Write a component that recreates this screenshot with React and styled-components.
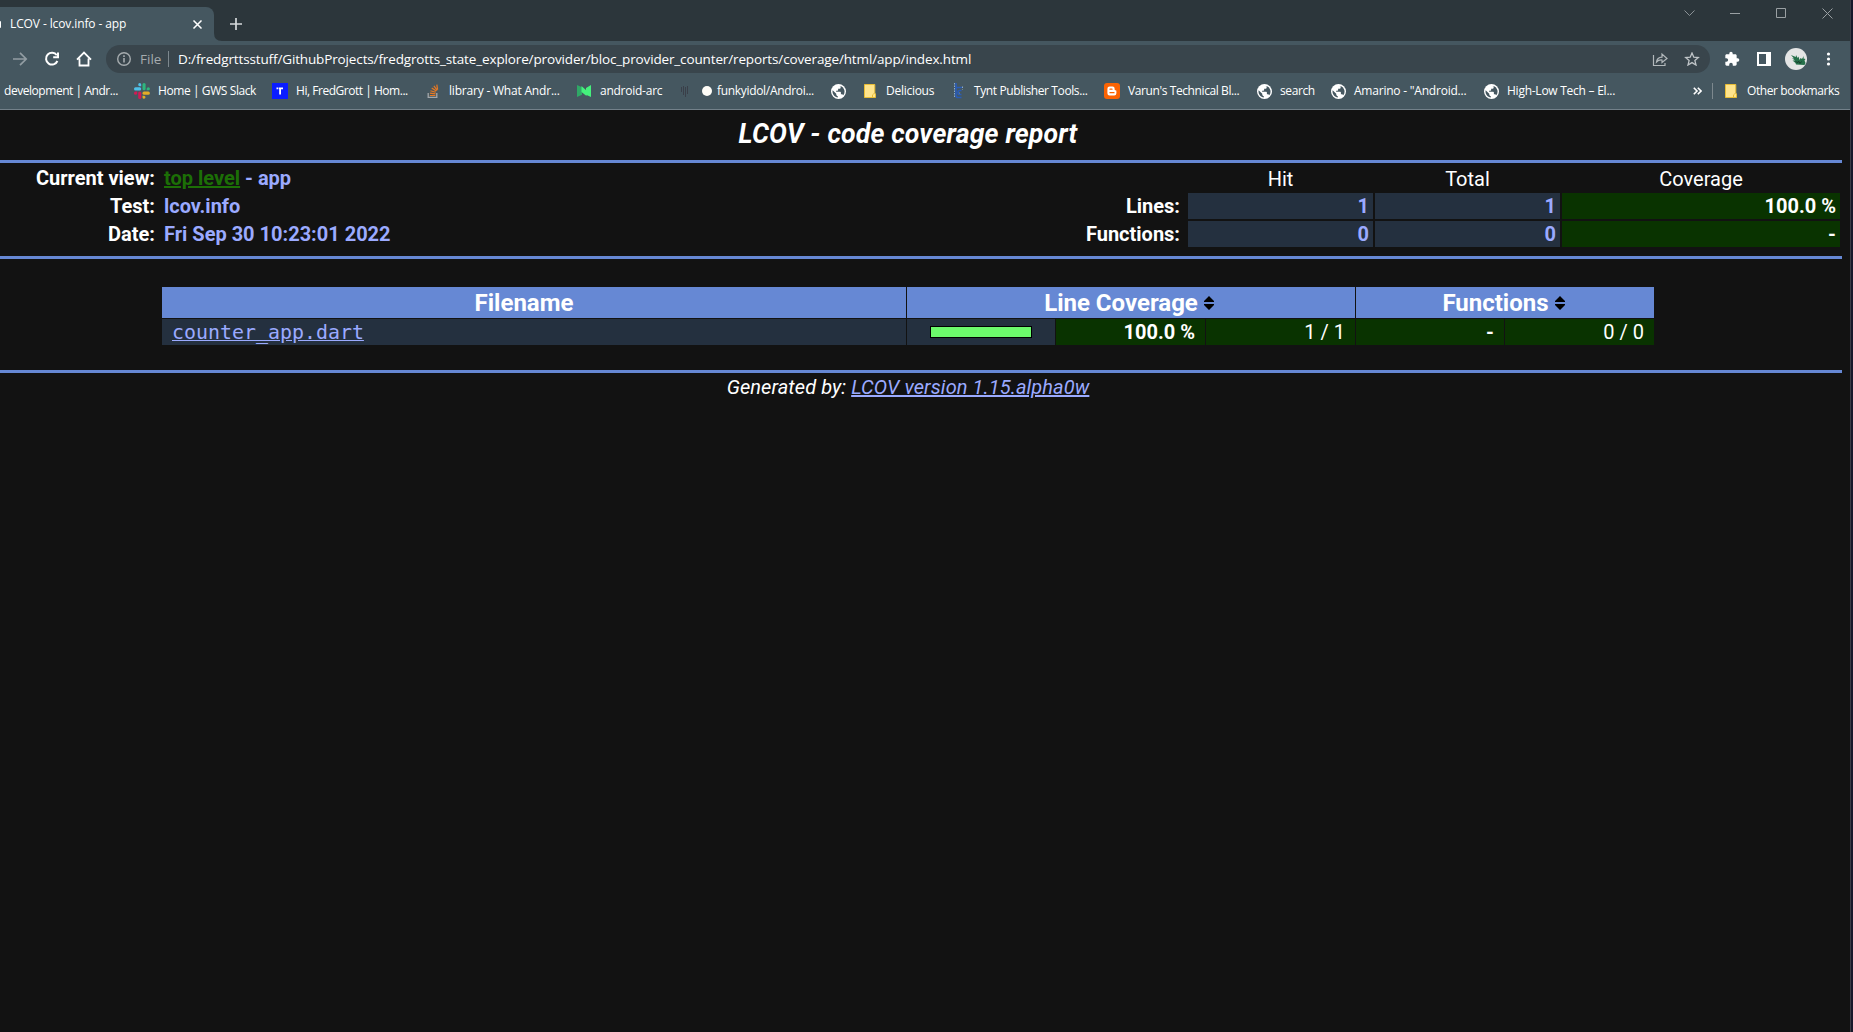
import React from 'react';
import styled, { createGlobalStyle } from 'styled-components';

const color = {
  frame: '#2c363b',
  bar: '#455760',
  omnibox: '#39454c',
  page: '#121212',
  rule: '#6688d4',
  cell: '#24303f',
  high: '#093300',
  value: '#9baaff',
};

const Global = createGlobalStyle`
  * { box-sizing: border-box; }
  body { margin: 0; background: #12131f; overflow: hidden; }
`;

/* ---------- browser chrome ---------- */

const Desktop = styled.div`
  display: flex;
  width: 1853px;
  height: 1032px;
  background: #17182a;
  font-family: 'Open Sans', 'Noto Sans', sans-serif;
`;

const Window = styled.div`
  display: flex;
  flex-direction: column;
  width: 1851px;
  height: 1032px;
  border-right: 1px solid #3b3c45;
  background: ${color.page};
`;

const TabStrip = styled.div`
  display: flex;
  align-items: flex-end;
  height: 41px;
  flex: none;
  background: ${color.frame};
`;

const Tab = styled.div`
  display: flex;
  align-items: center;
  width: 214px;
  height: 34px;
  padding-right: 11px;
  background: ${color.bar};
  border-radius: 0 8px 0 0;
  color: #fff;
`;

const Favicon = styled.span`
  width: 1px;
  height: 7px;
  margin-right: 9px;
  border-radius: 0 1px 1px 0;
  background: #fff;
`;

const TabTitle = styled.span`
  flex: 1;
  font-size: 12px;
  letter-spacing: -0.11px;
  line-height: 16px;
  white-space: nowrap;
`;

const TabCurve = styled.svg`
  width: 8px;
  height: 8px;
  fill: ${color.bar};
`;

const NewTab = styled.div`
  display: flex;
  align-items: center;
  height: 34px;
  padding-left: 8px;
`;

const WindowButtons = styled.div`
  display: flex;
  align-self: flex-start;
  align-items: center;
  height: 26px;
  margin-left: auto;
`;

const WindowButton = styled.span`
  display: flex;
  justify-content: center;
  width: 46px;
`;

const Toolbar = styled.div`
  display: flex;
  align-items: center;
  height: 36px;
  flex: none;
  padding: 0 13px 0 12px;
  background: ${color.bar};
`;

const NavButtons = styled.div`
  display: flex;
  gap: 16px;
  margin-right: 14px;
`;

const Omnibox = styled.div`
  display: flex;
  align-items: center;
  flex: none;
  width: 1604px;
  height: 28px;
  padding: 0 10px 0 10px;
  border-radius: 14px;
  background: ${color.omnibox};
  font-size: 13.5px;
  line-height: 20px;
  color: #fff;
`;

const Scheme = styled.span`
  width: 28px;
  margin-left: 8px;
  font-size: 13.5px;
  color: #a5abae;
`;

const Divider = styled.span`
  width: 1px;
  height: 16px;
  background: #7d888e;
`;

const Address = styled.span`
  flex: 1;
  margin-left: 9px;
  letter-spacing: -0.136px;
  white-space: nowrap;
`;

const OmniboxActions = styled.span`
  display: flex;
  gap: 16px;
`;

const ToolbarActions = styled.div`
  display: flex;
  align-items: center;
  gap: 14px;
  padding-left: 14px;
`;

const BookmarksBar = styled.div`
  display: flex;
  align-items: center;
  height: 33px;
  flex: none;
  padding-bottom: 4px;
  border-bottom: 1px solid #73818a;
  background: ${color.bar};
  font-size: 12px;
  line-height: 16px;
  color: #fff;
  overflow: hidden;
`;

const Bookmark = styled.div`
  display: flex;
  align-items: center;
  flex: none;
  gap: 8px;
  width: ${(p) => p.$width}px;
  letter-spacing: ${(p) => p.$tracking || 0}px;
  white-space: nowrap;
`;

const CutBookmark = styled(Bookmark)`
  padding-left: 4px;
`;

const IconSlot = styled.span`
  display: flex;
  align-items: center;
  justify-content: center;
  width: 16px;
  height: 16px;
  flex: none;
`;

const TitleDot = styled.span`
  width: 10px;
  height: 10px;
  margin: 0 -3px 0 1px;
  border-radius: 50%;
  background: #fffdf8;
`;

const Overflow = styled.div`
  display: flex;
  align-items: center;
  gap: 10px;
  margin-left: auto;
  padding-right: 10px;
`;

/* ---------- report ---------- */

const Report = styled.main`
  width: 1842px;
  font-family: Roboto, 'Liberation Sans', sans-serif;
  font-size: 20px;
  line-height: 24px;
  color: #fff;
`;

const Title = styled.h1`
  height: 50px;
  margin: 0;
  padding: 8px 26px 0 0;
  text-align: center;
  font-size: 26.67px;
  line-height: 32px;
  font-style: italic;
  font-weight: 700;
  letter-spacing: 0.14px;
`;

const Rule = styled.div`
  height: 3px;
  background: ${color.rule};
`;

const Summary = styled.section`
  display: flex;
  justify-content: space-between;
  height: 93px;
  padding: 2px 2px 0 0;
`;

const Facts = styled.dl`
  display: grid;
  grid-template-columns: 155px auto;
  grid-auto-rows: 28px;
  column-gap: 9px;
  align-content: start;
  margin: 0;
  line-height: 27px;
  font-weight: 700;
`;

const FactName = styled.dt`
  text-align: right;
`;

const FactValue = styled.dd`
  margin: 0;
  color: ${color.value};
`;

const Link = styled.a`
  color: ${(p) => (p.$visited ? '#1c6f06' : color.value)};
  text-decoration: underline;
`;

const Totals = styled.div`
  display: grid;
  grid-template-columns: 110px 185px 185px 278px;
  grid-template-rows: 26px 26px 26px;
  column-gap: 2px;
  row-gap: 2px;
  align-content: start;
`;

const TotalsHead = styled.div`
  text-align: center;
  line-height: 28px;
`;

const TotalsLabel = styled.div`
  padding-right: 6px;
  text-align: right;
  line-height: 26px;
  font-weight: 700;
`;

const TotalsCell = styled.div`
  padding-right: 4px;
  text-align: right;
  line-height: 26px;
  font-weight: 700;
  color: ${(p) => (p.$high ? '#fff' : color.value)};
  background: ${(p) => (p.$high ? color.high : color.cell)};
`;

const FileTable = styled.section`
  display: grid;
  grid-template-columns: 744px 148px 149px 149px 148px 149px;
  grid-template-rows: 31px 26px;
  gap: 1px;
  margin: 28px 0 25px 162px;
`;

const ColumnHead = styled.div`
  display: flex;
  align-items: center;
  justify-content: center;
  gap: 6px;
  grid-column: span ${(p) => p.$span || 1};
  padding: 1px ${(p) => p.$inset || 0}px 0 0;
  background: ${color.rule};
  font-size: 24px;
  line-height: 30px;
  font-weight: 700;
`;

const FileCell = styled.div`
  padding: 1px 0 0 10px;
  background: ${color.cell};
  font-family: 'DejaVu Sans Mono', 'Liberation Mono', monospace;
  font-size: 19.93px;
  line-height: 26px;
`;

const BarCell = styled.div`
  display: flex;
  align-items: center;
  justify-content: center;
  background: ${color.cell};
`;

const Bar = styled.div`
  width: 102px;
  height: 12px;
  border: 1px solid #000;
  background: #6cfa6c;
`;

const RateCell = styled.div`
  padding-right: 10px;
  background: ${color.high};
  text-align: right;
  line-height: 26px;
  font-weight: ${(p) => (p.$bold ? 700 : 400)};
`;

const Footer = styled.footer`
  padding: 2px 26px 0 0;
  text-align: center;
  font-style: italic;
  line-height: 24px;
  letter-spacing: 0.08px;
`;

/* ---------- icons ---------- */

const Globe = () => (
  <svg width="15" height="15" viewBox="2 2 20 20">
    <circle cx="12" cy="12" r="10" fill="#fff" />
    <path d="M4.200 10.200 9 15v1c0 1.100.9 2 2 2v1.900C7 19.400 4 16 4 12c0-.6.100-1.200.2-1.800ZM13 5h2l-.2 2c0 .800-.8 1.300-1.800 1.300h-1.500V10c0 .6-.5 1-1 1H8.800v1.200h5.400c.6 0 1 .4 1 1v2.600h1.300c.800 0 1.500.5 1.800 1.200A8 8 0 0 0 15 4.600Z" fill={color.bar} />
  </svg>
);

const Folder = () => (
  <svg width="12" height="14" viewBox="0 0 12 14">
    <path d="M.5.5h10.300v9.200h.7v3.800H.5Z" fill="#ffe48c" stroke="#e9bd35" />
    <path d="M8.500 13.500v-2.600l1.400-1.300" fill="none" stroke="#e9bd35" />
  </svg>
);

const Slack = () => (
  <svg width="16" height="16" viewBox="0 0 16 16">
    <g fill="#4fc0e8"><rect x="0" y="4.300" width="7.200" height="3.100" rx="1.500" /><path d="M4.200 1.600a1.500 1.500 0 0 1 3 0v1.600H5.700A1.500 1.500 0 0 1 4.200 1.600Z" /></g>
    <g fill="#2eb67d"><rect x="8.500" y="0" width="3.100" height="7.300" rx="1.500" /><path d="M12.700 7.300V5.800a1.600 1.500 0 1 1 1.600 1.500Z" /></g>
    <g fill="#d01b55"><rect x="4.200" y="8.600" width="3.100" height="7.300" rx="1.500" /><path d="M3.200 8.600v1.600a1.600 1.600 0 1 1-1.600-1.600Z" /></g>
    <g fill="#e3ac26"><rect x="8.500" y="8.600" width="7.300" height="3.100" rx="1.500" /><path d="M8.500 12.800h1.600a1.500 1.500 0 1 1-1.600 1.600Z" /></g>
  </svg>
);

const BlueT = () => (
  <svg width="16" height="16" viewBox="0 0 16 16">
    <path fill="#0a1cff" d="M0 0h16v16H0z" />
    <path fill="#fff" d="M4.500 4.500h1.600v1.700H4.500zM6.700 4.500H11v1.700H9V11.500H7.200V6.200h-.5z" />
  </svg>
);

const Stack = () => (
  <svg width="12" height="15" viewBox="0 0 12 15">
    <path d="M1.200 9v4.400h8.600V9" fill="none" stroke="#a3a8ac" strokeWidth="1.300" />
    <path d="M2.800 11.500h5.600M2.900 9.200l5.600.6M3.400 6.700l5.300 1.600M4.700 4.100l4.600 3M6.900 1.900l3.300 4.400M9.800.6l.8 5" stroke="#e87922" strokeWidth="1.200" />
  </svg>
);

const ArcMark = () => (
  <svg width="14" height="12" viewBox="0 0 14 12">
    <path fill="#2fa866" d="M0 0 5 2.200V9.800L0 12Z" />
    <path fill="#45f07c" d="M4.500 1 9.500 5.500V11L4.500 7ZM14 0V12L9 9.800V3Z" />
  </svg>
);

const Fork = () => (
  <svg width="8" height="11" viewBox="0 0 8 11">
    <path d="M.5 1v5M2.500 0v9M4.500 1v10M6.500 0v8" stroke="#3a3f49" strokeWidth="1" />
  </svg>
);

const Tynt = () => (
  <svg width="9" height="16" viewBox="0 0 9 16">
    <path d="M.5 0v14M8.500 3.500v3M5 9.500v2.500" stroke="#8fabc4" strokeDasharray="1.500 1" />
    <path d="M2 0v12.500q0 2 2 2h3.500M2 4.500h6M7.500 7.500H5.500q-1.500 0-1.500 2 0 2 1.500 2h2" fill="none" stroke="#2b5cb4" strokeWidth="1.700" />
  </svg>
);

const Blogger = () => (
  <svg width="16" height="16" viewBox="0 0 16 16">
    <rect width="16" height="16" rx="3" fill="#fb6303" />
    <path d="M5.600 3.500h3q2 0 2 2v.8q0 .9.900.9.900 0 .9.900v2.200q0 2.200-2.200 2.200H5.600q-2.200 0-2.200-2.200V5.700q0-2.200 2.200-2.200Z" fill="#fff" />
    <path d="M6 6.200h2M6 9.700h4" stroke="#fb6303" strokeWidth="1.300" strokeLinecap="round" />
  </svg>
);

const Sorter = () => (
  <svg width="10" height="14" viewBox="0 0 10 14">
    <path d="M5 0 10 5v1H0V5ZM0 8h10v1l-5 5-5-5Z" fill="#000" />
  </svg>
);

const Line = ({ w = 14, h = 14, d, stroke = '#fff', width = 1, fill = 'none' }) => (
  <svg width={w} height={h} viewBox={`0 0 ${w} ${h}`}>
    <path d={d} fill={fill} stroke={stroke} strokeWidth={width} />
  </svg>
);

const Avatar = () => (
  <svg width="22" height="22" viewBox="0 0 22 22">
    <circle cx="11" cy="11" r="11" fill="#e4e5e5" />
    <path d="M6 7l3 3.500-2-.3 3 2.300-2.500 0 3 2.500.5 1.500 8.500.5 1-2-1-2.500 1-1.500-2-.5.2-2.500-1.700 3-1.500-1-1 2-1-3.500-.8 1.500-1.700-3-.2 2Z" fill="#25704a" />
    <path d="M10.500 13l2 2 1-2 1.500 2.500 1.500-2" fill="none" stroke="#173f2c" />
  </svg>
);

const bookmarks = [
  { label: 'Home | GWS Slack', icon: <Slack />, width: 138, tracking: -0.41 },
  { label: 'Hi, FredGrott | Hom...', icon: <BlueT />, width: 153, tracking: -0.47 },
  { label: 'library - What Andr...', icon: <Stack />, width: 151, tracking: -0.2 },
  { label: 'android-arc', icon: <ArcMark />, width: 101, tracking: -0.25 },
  { label: 'funkyidol/Androi...', icon: <Fork />, dot: true, width: 153, tracking: -0.32 },
  { label: '', icon: <Globe />, width: 32 },
  { label: 'Delicious', icon: <Folder />, width: 88, tracking: -0.27 },
  { label: 'Tynt Publisher Tools...', icon: <Tynt />, width: 154, tracking: -0.39 },
  { label: "Varun's Technical Bl...", icon: <Blogger />, width: 152, tracking: -0.4 },
  { label: 'search', icon: <Globe />, width: 74, tracking: -0.4 },
  { label: 'Amarino - "Android...', icon: <Globe />, width: 153, tracking: -0.22 },
  { label: 'High-Low Tech – El...', icon: <Globe />, width: 140, tracking: -0.25 },
];

function Chrome() {
  return (
    <>
      <TabStrip>
        <Tab>
          <Favicon />
          <TabTitle>LCOV - lcov.info - app</TabTitle>
          <Line w={11} h={9} d="M1.500.5l8 8M9.500.5l-8 8" width={1.500} />
        </Tab>
        <TabCurve viewBox="0 0 8 8"><path d="M0 0Q0 8 8 8H0Z" /></TabCurve>
        <NewTab><Line w={12} h={12} d="M6 0v12M0 6h12" stroke="#d5d9db" width={1.700} /></NewTab>
        <WindowButtons>
          <WindowButton><Line w={11} h={7} d="M.5.5l5 5 5-5" stroke="#8b9296" /></WindowButton>
          <WindowButton><Line w={10} h={1} d="M0 .5h10" stroke="#9aa0a3" /></WindowButton>
          <WindowButton><Line w={10} h={10} d="M.5.5h9v9h-9z" stroke="#9aa0a3" /></WindowButton>
          <WindowButton><Line w={11} h={11} d="M.5.5l10 10M10.500.5l-10 10" stroke="#9aa0a3" /></WindowButton>
        </WindowButtons>
      </TabStrip>
      <Toolbar>
        <NavButtons>
          <Line w={16} h={16} d="M1 8h13M8 1.800 14.200 8 8 14.200" stroke="#929da3" width={1.700} />
          <Line w={16} h={16} d="M12.800 4.300A5.900 5.900 0 1 0 13.400 10M14 1.500V6.300H9.200" width={2} />
          <Line w={16} h={16} d="M1 8.700 8 1.500 15 8.700M3.500 7.500V14.500H12.500V7.500" width={1.800} />
        </NavButtons>
        <Omnibox>
          <svg width="16" height="16" viewBox="0 0 16 16">
            <circle cx="8" cy="8" r="6.300" fill="none" stroke="#a5abae" strokeWidth="1.400" />
            <path d="M8 7v4.500M8 4.300v1.600" stroke="#a5abae" strokeWidth="1.600" />
          </svg>
          <Scheme>File</Scheme>
          <Divider />
          <Address>D:/fredgrttsstuff/GithubProjects/fredgrotts_state_explore/provider/bloc_provider_counter/reports/coverage/html/app/index.html</Address>
          <OmniboxActions>
            <Line w={16} h={14} d="M1.500 3v10.500h11.500V11M4.500 10q.5-4.500 5.500-4.800V2L15 6.500 10 10.500V8Q6.500 7.700 4.500 10Z" stroke="#b2b8bb" width={1.200} />
            <Line w={16} h={14} d="M8 1l1.800 4.200 4.500.4-3.400 3L12 13 8 10.600 4 13l1.100-4.400-3.400-3 4.500-.4Z" stroke="#c0c5c8" width={1.300} />
          </OmniboxActions>
        </Omnibox>
        <ToolbarActions>
          <svg width="17" height="16" viewBox="0 0 25.500 24">
            <path fill="#fff" d="M20.500 11H19V7c0-1.100-.9-2-2-2h-4V3.500a2.500 2.500 0 0 0-5 0V5H4c-1.100 0-2 .9-2 2v3.800h1.500a2.700 2.700 0 0 1 0 5.400H2V20c0 1.100.9 2 2 2h3.800v-1.500a2.700 2.700 0 0 1 5.400 0V22H17c1.100 0 2-.9 2-2v-4h1.500a2.500 2.500 0 0 0 0-5Z" />
          </svg>
          <svg width="16" height="14" viewBox="0 0 16 14">
            <path fill="#fff" fillRule="evenodd" d="M2 0h14v14H2ZM4 2v10h7V2Z" />
          </svg>
          <Avatar />
          <svg width="16" height="14" viewBox="0 0 16 14" fill="#fff">
            <circle cx="7.500" cy="2" r="1.600" /><circle cx="7.500" cy="7" r="1.600" /><circle cx="7.500" cy="12" r="1.600" />
          </svg>
        </ToolbarActions>
      </Toolbar>
      <BookmarksBar>
        <CutBookmark $width={134} $tracking={-0.45}>development | Andr...</CutBookmark>
        {bookmarks.map((b, i) => (
          <Bookmark key={i} $width={b.width} $tracking={b.tracking}>
            <IconSlot>{b.icon}</IconSlot>
            {b.dot && <TitleDot />}
            {b.label}
          </Bookmark>
        ))}
        <Overflow>
          <Line w={9} h={8} d="M.8.8 4 4 .8 7.200M4.800.8 8 4 4.800 7.200" width={1.600} />
          <Divider />
          <Bookmark $width={117} $tracking={-0.42}>
            <IconSlot><Folder /></IconSlot>
            Other bookmarks
          </Bookmark>
        </Overflow>
      </BookmarksBar>
    </>
  );
}

export default function App() {
  return (
    <>
      <Global />
      <Desktop>
        <Window>
          <Chrome />
          <Report>
            <Title>LCOV - code coverage report</Title>
            <Rule />
            <Summary>
              <Facts>
                <FactName>Current view:</FactName>
                <FactValue><Link $visited>top level</Link> - app</FactValue>
                <FactName>Test:</FactName>
                <FactValue>lcov.info</FactValue>
                <FactName>Date:</FactName>
                <FactValue>Fri Sep 30 10:23:01 2022</FactValue>
              </Facts>
              <Totals>
                <span />
                <TotalsHead>Hit</TotalsHead>
                <TotalsHead>Total</TotalsHead>
                <TotalsHead>Coverage</TotalsHead>
                <TotalsLabel>Lines:</TotalsLabel>
                <TotalsCell>1</TotalsCell>
                <TotalsCell>1</TotalsCell>
                <TotalsCell $high>100.0 %</TotalsCell>
                <TotalsLabel>Functions:</TotalsLabel>
                <TotalsCell>0</TotalsCell>
                <TotalsCell>0</TotalsCell>
                <TotalsCell $high>-</TotalsCell>
              </Totals>
            </Summary>
            <Rule />
            <FileTable>
              <ColumnHead $inset={20}>Filename</ColumnHead>
              <ColumnHead $span={3} $inset={4}>Line Coverage <Sorter /></ColumnHead>
              <ColumnHead $span={2} $inset={3}>Functions <Sorter /></ColumnHead>
              <FileCell><Link>counter_app.dart</Link></FileCell>
              <BarCell><Bar /></BarCell>
              <RateCell $bold>100.0 %</RateCell>
              <RateCell>1 / 1</RateCell>
              <RateCell $bold>-</RateCell>
              <RateCell>0 / 0</RateCell>
            </FileTable>
            <Rule />
            <Footer>Generated by: <Link>LCOV version 1.15.alpha0w</Link></Footer>
          </Report>
        </Window>
      </Desktop>
    </>
  );
}
